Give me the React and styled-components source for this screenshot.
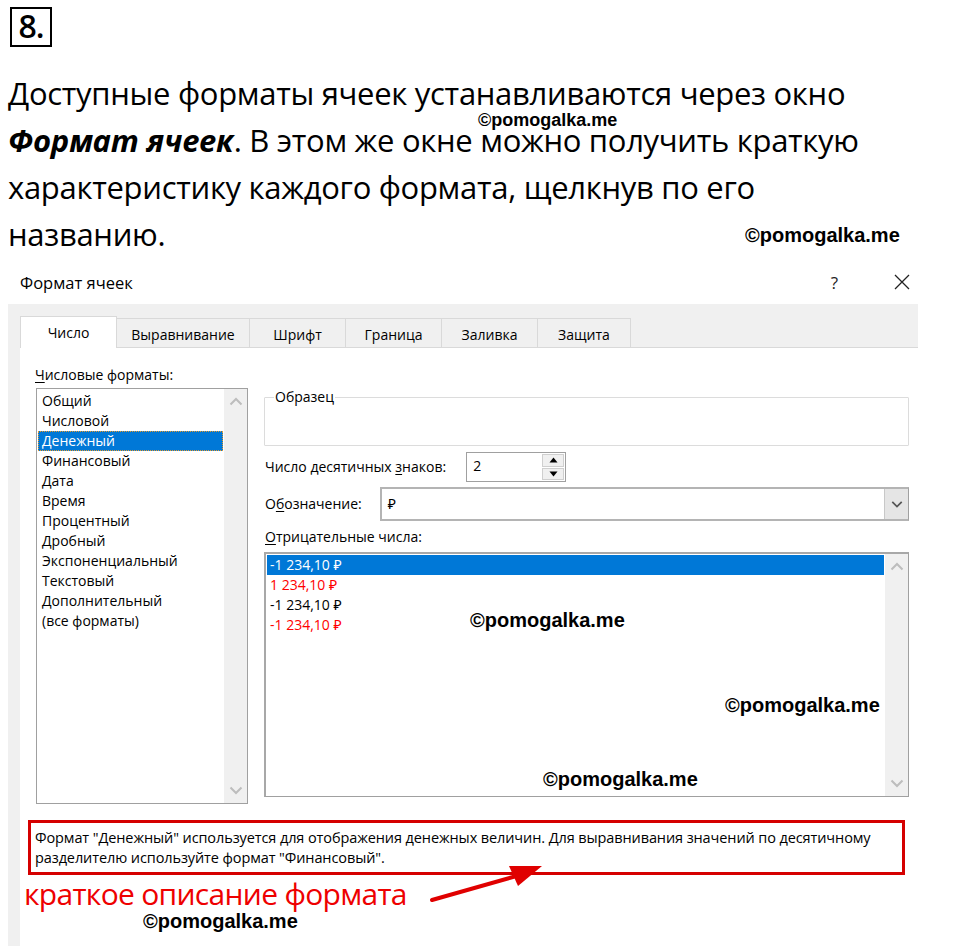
import React from "react";
import styled, { createGlobalStyle } from "styled-components";

const Global = createGlobalStyle`
  html, body { margin: 0; padding: 0; background: #fff; }
  body { font-family: "Open Sans", "Noto Sans", sans-serif; color: #000; }
  * { box-sizing: border-box; }
`;

const Page = styled.div`
  position: relative;
  width: 960px;
  height: 946px;
  overflow: hidden;
  background: #fff;
`;

const Head = styled.div`
  position: relative;
  padding: 7px 0 0 10px;
`;

const NumBox = styled.div`
  width: 42px;
  height: 40px;
  border: 2px solid #000;
  display: flex;
  align-items: center;
  justify-content: center;
  font-family: "Open Sans", sans-serif;
  font-size: 32px;
  font-weight: 600;
  letter-spacing: -1px;
  line-height: 1;
  padding-bottom: 2px;
`;

const Para = styled.p`
  margin: 23px 0 0 -2px;
  font-family: "Open Sans", sans-serif;
  font-size: 31px;
  letter-spacing: -0.3px;
  line-height: 47px;
  color: #000;
  b { font-weight: 700; font-style: italic; }
`;

const Mark = styled.span`
  position: absolute;
  font-family: "Liberation Sans", "Arial", sans-serif;
  font-weight: 700;
  font-size: ${(p) => p.$size || 19}px;
  line-height: 1;
  color: #000;
  white-space: nowrap;
  left: ${(p) => p.$x}px;
  top: ${(p) => p.$y}px;
`;

const Dialog = styled.div`
  margin-top: 4px;
`;

const TitleBar = styled.div`
  height: 42px;
  display: flex;
  align-items: center;
  padding: 0 25px 2px 20px;
  font-size: 16.5px;
  color: #000;
`;

const Title = styled.div`
  flex: 1;
`;

const TitleBtn = styled.div`
  width: 67px;
  display: flex;
  justify-content: center;
  font-size: 17px;
  color: #222;
`;

const Frame = styled.div`
  margin-left: 8px;
  width: 910px;
  background: #f0f0f0;
  padding: 12px 0 0 12px;
  height: 642px;
`;

const Tabs = styled.div`
  display: flex;
  align-items: flex-end;
  height: 32px;
`;

const Tab = styled.div`
  width: ${(p) => p.$w}px;
  height: ${(p) => (p.$active ? 32 : 30)}px;
  background: ${(p) => (p.$active ? "#fff" : "#f0f0f0")};
  border: 1px solid #d9d9d9;
  border-bottom: ${(p) => (p.$active ? "none" : "1px solid #d9d9d9")};
  border-left: ${(p) => (p.$first || p.$active ? "1px solid #d9d9d9" : "none")};
  display: flex;
  align-items: center;
  justify-content: center;
  font-size: 14px;
  color: #000;
  padding-top: ${(p) => (p.$active ? 0 : 2)}px;
`;

const TabFill = styled.div`
  flex: 1;
  border-bottom: 1px solid #d9d9d9;
`;

const Panel = styled.div`
  position: relative;
  background: #fff;
  height: 598px;
  padding: 17px 0 0 15px;
`;

const Columns = styled.div`
  display: flex;
  gap: 17px;
`;

const LeftCol = styled.div`
  width: 212px;
  display: flex;
  flex-direction: column;
`;

const Label = styled.div`
  font-size: 14px;
  line-height: 20px;
  color: #000;
  white-space: nowrap;
  u { text-decoration: underline; text-underline-offset: 2px; }
`;

const ListBox = styled.div`
  margin: 3px 0 0 1px;
  width: 212px;
  height: ${(p) => p.$h}px;
  border: 1px solid #a0a0a0;
  display: flex;
  background: #fff;
`;

const Items = styled.div`
  flex: 1;
  padding: ${(p) => p.$pad || "2px 1px 0 1px"};
`;

const Item = styled.div`
  height: 20px;
  line-height: 20px;
  font-size: 14px;
  padding-left: ${(p) => p.$pl || 4}px;
  color: ${(p) => (p.$sel ? "#fff" : p.$red ? "#ff0000" : "#000")};
  background: ${(p) => (p.$sel ? "#0078d7" : "transparent")};
  outline: ${(p) => (p.$dotted ? "1px dotted #e69a2e" : "none")};
  outline-offset: -1px;
  white-space: nowrap;
`;

const ScrollBar = styled.div`
  width: 23px;
  background: #f0f0f0;
  display: flex;
  flex-direction: column;
  justify-content: space-between;
  align-items: center;
  padding: 8px 0 8px;
`;

const RightCol = styled.div`
  flex: 1;
  display: flex;
  flex-direction: column;
  padding-top: 25px;
  max-width: 645px;
`;

const Group = styled.fieldset`
  margin: 0;
  padding: 0;
  height: 56px;
  border: 1px solid #dcdcdc;
  border-radius: 1px;
  legend {
    font-size: 14px;
    padding: 0 1px;
    margin-left: 9px;
    line-height: 14px;
  }
`;

const Row = styled.div`
  display: flex;
  align-items: center;
  margin-top: ${(p) => p.$mt}px;
  gap: ${(p) => p.$gap}px;
  padding-left: 1px;
`;

const Spinner = styled.div`
  width: 100px;
  height: 30px;
  border: 1px solid #a0a0a0;
  display: flex;
  background: #fff;
`;

const SpinValue = styled.div`
  flex: 1;
  font-size: 14px;
  padding: 3px 0 0 6px;
`;

const SpinBtns = styled.div`
  width: 24px;
  display: flex;
  flex-direction: column;
  padding: 1px;
  gap: 1px;
`;

const SpinBtn = styled.div`
  flex: 1;
  background: #f0f0f0;
  border: 1px solid #cfcfcf;
  display: flex;
  align-items: center;
  justify-content: center;
`;

const Select = styled.div`
  flex: 1;
  height: 34px;
  border: 2px solid #b4b4b4;
  border-right: 1px solid #a0a0a0;
  display: flex;
  background: #fff;
`;

const SelectValue = styled.div`
  flex: 1;
  font-size: 14px;
  padding: 5px 0 0 6px;
`;

const SelectBtn = styled.div`
  width: 24px;
  background: #e5e5e5;
  border-left: 1px solid #c8c8c8;
  display: flex;
  align-items: center;
  justify-content: center;
`;

const NegList = styled.div`
  margin-top: 5px;
  height: 245px;
  border: 2px solid #a8a8a8;
  border-right: 1px solid #a0a0a0;
  border-bottom: 1px solid #a0a0a0;
  display: flex;
  background: #fff;
`;

const Desc = styled.div`
  margin: 16px 0 0 -7px;
  width: 877px;
  height: 55px;
  border: 3px solid #d50000;
  padding: 5px 0 0 4px;
  font-family: "Open Sans", sans-serif;
  font-size: 14.5px;
  letter-spacing: -0.1px;
  line-height: 20px;
  color: #000;
`;

const Caption = styled.div`
  margin: 3px 0 0 -11px;
  font-family: "Open Sans", sans-serif;
  font-size: 30px;
  letter-spacing: -0.7px;
  line-height: 32px;
  color: #ee0000;
`;

const Arrow = styled.svg`
  position: absolute;
  left: 392px;
  top: 514px;
`;

const Chevron = ({ up, color = "#bdbdbd", w = 14 }) => (
  <svg width={w} height="9" viewBox="0 0 14 9">
    <path
      d={up ? "M1.5 7.5 L7 2 L12.5 7.5" : "M1.5 1.5 L7 7 L12.5 1.5"}
      fill="none"
      stroke={color}
      strokeWidth="2"
    />
  </svg>
);

const Tri = ({ up }) => (
  <svg width="9" height="6" viewBox="0 0 9 6">
    <path d={up ? "M0.5 5.5 L4.5 0.5 L8.5 5.5 Z" : "M0.5 0.5 L4.5 5.5 L8.5 0.5 Z"} fill="#000" />
  </svg>
);

const formats = [
  "Общий",
  "Числовой",
  "Денежный",
  "Финансовый",
  "Дата",
  "Время",
  "Процентный",
  "Дробный",
  "Экспоненциальный",
  "Текстовый",
  "Дополнительный",
  "(все форматы)",
];

const negs = [
  { t: "-1 234,10 ₽", sel: true },
  { t: "1 234,10 ₽", red: true },
  { t: "-1 234,10 ₽" },
  { t: "-1 234,10 ₽", red: true },
];

const tabs = [
  { t: "Число", w: 97, active: true },
  { t: "Выравнивание", w: 133 },
  { t: "Шрифт", w: 96 },
  { t: "Граница", w: 96 },
  { t: "Заливка", w: 96 },
  { t: "Защита", w: 93 },
];

export default function App() {
  return (
    <Page>
      <Global />
      <Head>
        <NumBox>8.</NumBox>
        <Para>
          Доступные форматы ячеек устанавливаются через окно
          <br />
          <b>Формат ячеек</b>. В этом же окне можно получить краткую
          <br />
          характеристику каждого формата, щелкнув по его
          <br />
          названию.
        </Para>
      </Head>
      <Mark $x={478} $y={111} $size={18}>©pomogalka.me</Mark>
      <Mark $x={745} $y={225} $size={20}>©pomogalka.me</Mark>

      <Dialog>
        <TitleBar>
          <Title>Формат ячеек</Title>
          <TitleBtn>?</TitleBtn>
          <TitleBtn>
            <svg width="16" height="16" viewBox="0 0 16 16">
              <path d="M1 1 L15 15 M15 1 L1 15" stroke="#222" strokeWidth="1.3" />
            </svg>
          </TitleBtn>
        </TitleBar>
        <Frame>
          <Tabs>
            {tabs.map((t, i) => (
              <Tab key={t.t} $w={t.w} $active={t.active} $first={i === 0}>
                {t.t}
              </Tab>
            ))}
            <TabFill />
          </Tabs>
          <Panel>
            <Columns>
              <LeftCol>
                <Label>
                  <u>Ч</u>исловые форматы:
                </Label>
                <ListBox $h={416}>
                  <Items>
                    {formats.map((f) => (
                      <Item key={f} $sel={f === "Денежный"} $dotted={f === "Денежный"}>
                        {f}
                      </Item>
                    ))}
                  </Items>
                  <ScrollBar>
                    <Chevron up />
                    <Chevron />
                  </ScrollBar>
                </ListBox>
              </LeftCol>
              <RightCol>
                <Group>
                  <legend>Образец</legend>
                </Group>
                <Row $mt={6} $gap={20}>
                  <Label>
                    Число десятичных <u>з</u>наков:
                  </Label>
                  <Spinner>
                    <SpinValue>2</SpinValue>
                    <SpinBtns>
                      <SpinBtn>
                        <Tri up />
                      </SpinBtn>
                      <SpinBtn>
                        <Tri />
                      </SpinBtn>
                    </SpinBtns>
                  </Spinner>
                </Row>
                <Row $mt={5} $gap={18}>
                  <Label>
                    О<u>б</u>означение:
                  </Label>
                  <Select>
                    <SelectValue>₽</SelectValue>
                    <SelectBtn>
                      <Chevron color="#555" w={12} />
                    </SelectBtn>
                  </Select>
                </Row>
                <Row $mt={6} $gap={0}>
                  <Label>
                    <u>О</u>трицательные числа:
                  </Label>
                </Row>
                <NegList>
                  <Items $pad="1px 1px 0 1px">
                    {negs.map((n, i) => (
                      <Item key={i} $sel={n.sel} $red={n.red} $pl={3}>
                        {n.t}
                      </Item>
                    ))}
                  </Items>
                  <ScrollBar>
                    <Chevron up />
                    <Chevron />
                  </ScrollBar>
                </NegList>
              </RightCol>
            </Columns>
            <Desc>
              Формат "Денежный" используется для отображения денежных величин. Для выравнивания значений по десятичному
              <br />
              разделителю используйте формат "Финансовый".
            </Desc>
            <Caption>краткое описание формата</Caption>
            <Arrow width="132" height="50" viewBox="0 0 132 50">
              <path d="M20 38 L108 13" stroke="#e00000" strokeWidth="4" strokeLinecap="round" />
              <path d="M97 4 L130 4 L106 24 Z" fill="#e00000" />
            </Arrow>
            <Mark $x={450} $y={262} $size={20}>©pomogalka.me</Mark>
            <Mark $x={705} $y={347} $size={20}>©pomogalka.me</Mark>
            <Mark $x={523} $y={421} $size={20}>©pomogalka.me</Mark>
            <Mark $x={123} $y={563} $size={20}>©pomogalka.me</Mark>
          </Panel>
        </Frame>
      </Dialog>
    </Page>
  );
}
